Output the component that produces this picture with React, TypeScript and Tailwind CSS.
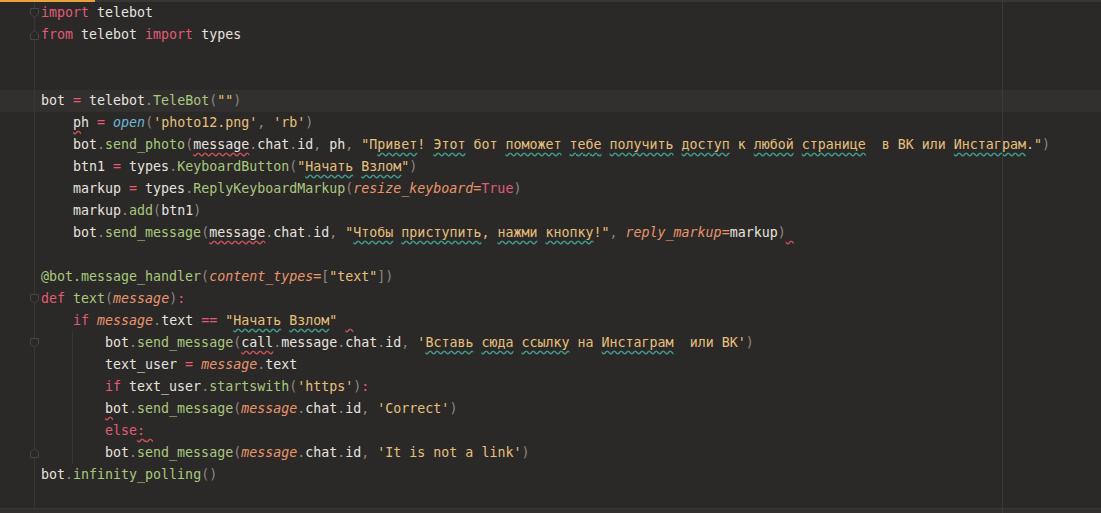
import React from "react";

type Tok = [string, string];

const k = "text-[#e25c74]";
const w = "text-[#e6e3df]";
const p = "text-[#8b8783]";
const f = "text-[#a9c87d]";
const s = "text-[#e6c07b]";
const o = "italic text-[#e8956a]";
const b = "italic text-[#6cb6d6]";
const typo = "underline decoration-wavy decoration-[#3f9e8c] underline-offset-[3px]";
const err = "underline decoration-wavy decoration-[#c8505a] underline-offset-[3px]";

const T = (text: string, cls: string): Tok => [text, cls];

const lines: { toks: Tok[]; fold?: "open" | "close"; guide?: boolean; current?: boolean }[] = [
  { toks: [T("import", k), T(" telebot", w)], fold: "open" },
  { toks: [T("from", k), T(" telebot ", w), T("import", k), T(" types", w)], fold: "close" },
  { toks: [] },
  { toks: [] },
  {
    current: true,
    toks: [T("bot ", w), T("=", k), T(" telebot", w), T(".", p), T("TeleBot", f), T("(", p), T('""', s), T(")", p)],
  },
  {
    toks: [
      T("    ", w), T("p", `${w} ${err}`), T("h ", w), T("=", k), T(" ", w), T("open", b), T("(", p),
      T("'photo12.png'", s), T(", ", p), T("'rb'", s), T(")", p),
    ],
  },
  {
    toks: [
      T("    bot", w), T(".", p), T("send_photo", f), T("(", p), T("message", `${w} ${err}`), T(".", p), T("chat", w),
      T(".", p), T("id", w), T(", ", p), T("ph", w), T(", ", p), T('"П', s), T("ривет", `${s} ${typo}`), T("! ", s),
      T("Этот", `${s} ${typo}`), T(" бот ", s), T("поможет", `${s} ${typo}`), T(" ", s), T("тебе", `${s} ${typo}`),
      T(" ", s), T("получить", `${s} ${typo}`), T(" ", s), T("доступ", `${s} ${typo}`), T(" к ", s),
      T("любой", `${s} ${typo}`), T(" ", s), T("странице", `${s} ${typo}`), T("  в ВК или ", s),
      T("Инстаграм", `${s} ${typo}`), T('."', s), T(")", p),
    ],
  },
  {
    toks: [
      T("    btn1 ", w), T("=", k), T(" types", w), T(".", p), T("KeyboardButton", f), T("(", p), T('"', s),
      T("Начать", `${s} ${typo}`), T(" ", s), T("Взлом", `${s} ${typo}`), T('"', s), T(")", p),
    ],
  },
  {
    toks: [
      T("    markup ", w), T("=", k), T(" types", w), T(".", p), T("ReplyKeyboardMarkup", f), T("(", p),
      T("resize_keyboard=", o), T("True", k), T(")", p),
    ],
  },
  { toks: [T("    markup", w), T(".", p), T("add", f), T("(", p), T("btn1", w), T(")", p)] },
  {
    toks: [
      T("    bot", w), T(".", p), T("send_message", f), T("(", p), T("message", `${w} ${err}`), T(".", p), T("chat", w),
      T(".", p), T("id", w), T(", ", p), T('"', s), T("Чтобы", `${s} ${typo}`), T(" ", s),
      T("приступить", `${s} ${typo}`), T(", ", s), T("нажми", `${s} ${typo}`), T(" ", s),
      T("кнопку", `${s} ${typo}`), T('!"', s), T(", ", p), T("reply_markup=", o), T("markup", w), T(")", p),
      T(" ", err),
    ],
  },
  { toks: [] },
  {
    toks: [
      T("@bot.message_handler", f), T("(", p), T("content_types=", o), T("[", p), T('"text"', s), T("])", p),
    ],
  },
  {
    fold: "open",
    toks: [T("def", k), T(" ", w), T("text", f), T("(", p), T("message", o), T(")", p), T(":", k)],
  },
  {
    toks: [
      T("    ", w), T("if", k), T(" ", w), T("message", o), T(".", p), T("text ", w), T("==", k), T(" ", w), T('"', s),
      T("Начать", `${s} ${typo}`), T(" ", s), T("Взлом", `${s} ${typo}`), T('"', s), T(" ", w), T(" ", err),
    ],
  },
  {
    fold: "open",
    guide: true,
    toks: [
      T("        bot", w), T(".", p), T("send_message", f), T("(", p), T("call", `${w} ${err}`), T(".", p),
      T("message", w), T(".", p), T("chat", w), T(".", p), T("id", w), T(", ", p), T("'", s),
      T("Вставь", `${s} ${typo}`), T(" ", s), T("сюда", `${s} ${typo}`), T(" ", s), T("ссылку", `${s} ${typo}`),
      T(" на ", s), T("Инстаграм", `${s} ${typo}`), T("  или ВК'", s), T(")", p),
    ],
  },
  { guide: true, toks: [T("        text_user ", w), T("=", k), T(" ", w), T("message", o), T(".", p), T("text", w)] },
  {
    guide: true,
    toks: [
      T("        ", w), T("if", k), T(" text_user", w), T(".", p), T("startswith", f), T("(", p), T("'https'", s),
      T(")", p), T(":", k),
    ],
  },
  {
    guide: true,
    toks: [
      T("        ", w), T("b", `${w} ${err}`), T("ot", w), T(".", p), T("send_message", f), T("(", p), T("message", o),
      T(".", p), T("chat", w), T(".", p), T("id", w), T(", ", p), T("'Correct'", s), T(")", p),
    ],
  },
  { guide: true, toks: [T("        ", w), T("else", k), T(":", `${k} ${err}`), T(" ", err)] },
  {
    fold: "close",
    guide: true,
    toks: [
      T("        bot", w), T(".", p), T("send_message", f), T("(", p), T("message", o), T(".", p), T("chat", w),
      T(".", p), T("id", w), T(", ", p), T("'It is not a link'", s), T(")", p),
    ],
  },
  { toks: [T("bot", w), T(".", p), T("infinity_polling", f), T("()", p)] },
];

function Fold({ kind }: { kind: "open" | "close" }) {
  return (
    <svg className="absolute right-[-5px] top-[6px]" width="9" height="10" viewBox="0 0 9 10">
      {kind === "open" ? (
        <path d="M0.5 0.5 H8.5 V6 L4.5 9.5 L0.5 6 Z" fill="#2b2828" stroke="#4a4545" />
      ) : (
        <path d="M0.5 9.5 H8.5 V4 L4.5 0.5 L0.5 4 Z" fill="#2b2828" stroke="#4a4545" />
      )}
    </svg>
  );
}

export default function App() {
  const rows = [...lines, { toks: [] }];
  return (
    <div
      className="w-[1101px] h-[513px] bg-[#2b2828] overflow-hidden flex flex-col relative"
      style={{ fontFamily: '"DejaVu Sans Mono", "Liberation Mono", monospace' }}
    >
      <div className="h-[2px] flex shrink-0">
        <div className="w-[95px] bg-[#e9a23b]" />
        <div className="flex-1 bg-[#3a3535]" />
      </div>
      <div className="flex-1 flex flex-col">
        {rows.map((line, i) => (
          <div key={i} className={`flex h-[22px] shrink-0 ${"current" in line && line.current ? "bg-[#322f2f]" : ""}`}>
            <div className="w-[35px] shrink-0 border-r border-[#3a3636] relative">
              {"fold" in line && line.fold && <Fold kind={line.fold} />}
            </div>
            <div className="relative flex-1 pl-[6px] text-[13.3px] leading-[22px] whitespace-pre">
              {"guide" in line && line.guide && <div className="absolute left-[37px] top-0 bottom-0 w-px bg-[#3a3636]" />}
              {line.toks.map(([t, c], j) => (
                <span key={j} className={c}>
                  {t}
                </span>
              ))}
            </div>
          </div>
        ))}
        <div className="flex-1 flex">
          <div className="w-[35px] border-r border-[#3a3636]" />
        </div>
      </div>
      <div className="h-[8px] shrink-0 bg-[#332f2f] border-t border-[#3a3636]" />
      <div className="absolute left-[1002px] top-0 bottom-0 w-px bg-[#3e3939]" />
    </div>
  );
}
